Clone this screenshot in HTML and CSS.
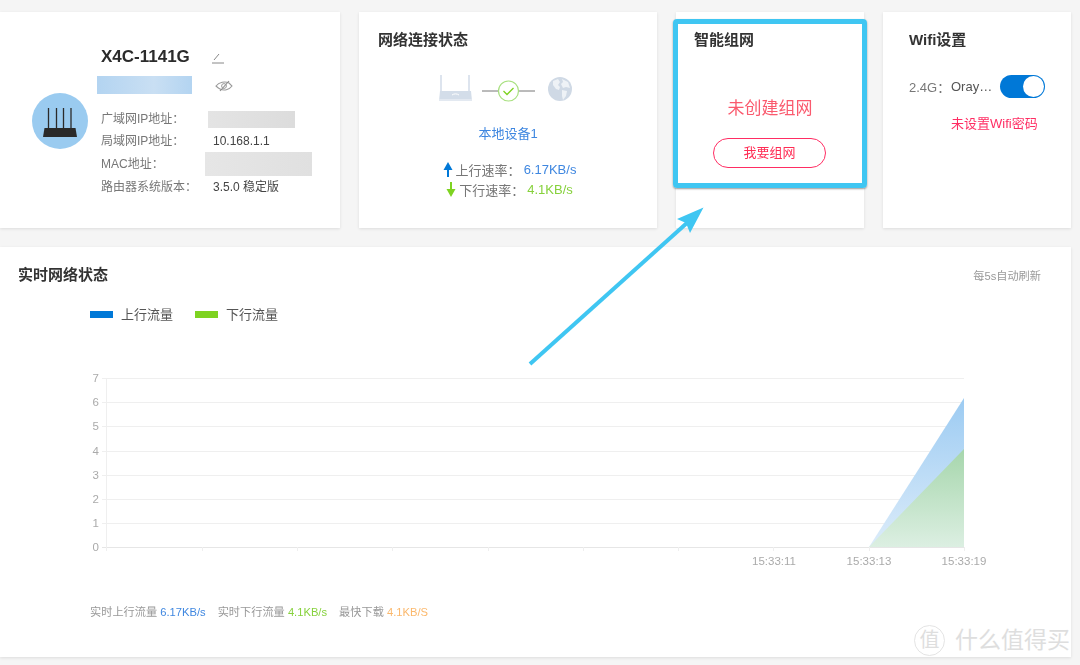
FILE: index.html
```html
<!doctype html>
<html lang="zh-CN">

<head>
    <meta charset="utf-8">
    <meta name="viewport" content="width=device-width, initial-scale=1, shrink-to-fit=no">
    <title>路由器状态</title>
    <link rel="stylesheet" href="styles.css">
</head>

<body>

    <div class="page">
        <section class="cards">
            <div class="card device">
                <div class="avatar">
                    <svg width="56" height="56" viewBox="0 0 56 56">
                        <circle cx="28" cy="28" r="28" fill="#9acbf0" />
                        <path d="M16.500 15v21M24.500 15v21M31.500 15v21M39 15v21" stroke="#2b2b2b" stroke-width="1.300" />
                        <path d="M11 44l1.500-9h31l1.500 9z" fill="#2a2a2a" />
                    </svg>
                </div>
                <div class="info">
                    <div class="name-row">
                        <b class="name">X4C-1141G</b>
                        <svg class="pen" width="14" height="14" viewBox="0 0 14 14">
                            <path d="M3 10l5-6M1 13h12" stroke="#888" stroke-width="1" fill="none" />
                        </svg>
                    </div>
                    <div class="pass-row">
                        <span class="mask mask-blue"></span>
                        <svg class="eye" width="18" height="14" viewBox="0 0 18 14">
                            <path d="M1 7c3-4 9-5 13-3 1 1 2 2 3 3-3 4-8 5-12 3-2-1-3-2-4-3z" stroke="#999" stroke-width="1.100" fill="none" />
                            <path d="M5 12L14 2" stroke="#888" stroke-width="1.100" />
                            <circle cx="9" cy="7" r="2.400" fill="none" stroke="#999" />
                        </svg>
                    </div>
                    <div class="row"><span class="label">广域网IP地址：</span><span class="mask mask-wan"></span></div>
                    <div class="row"><span class="label">局域网IP地址：</span><span class="value">10.168.1.1</span></div>
                    <div class="row"><span class="label">MAC地址：</span><span class="mask mask-mac"></span></div>
                    <div class="row"><span class="label">路由器系统版本：</span><span class="value">3.5.0 稳定版</span></div>
                </div>
            </div>

            <div class="card link">
                <h3>网络连接状态</h3>
                <div class="topology">
                    <svg width="121" height="30" viewBox="0 0 121 30">
                        <path d="M2 1v16M30 1v16" stroke="#d5deea" stroke-width="1.600" />
                        <path d="M1 17h31l1 10H0z" fill="#d3dde9" />
                        <path d="M0 25h33v2H0z" fill="#e3e9f1" />
                        <path d="M13 21c2-1.500 5-1.500 7 0" stroke="#fff" fill="none" />
                        <path d="M43 17h16M80 17h16" stroke="#777" stroke-width="1" />
                        <circle cx="69.500" cy="17" r="10" fill="#fff" stroke="#a8e080" stroke-width="1.200" />
                        <path d="M64.500 17l3.500 3.500 6.500-6.500" fill="none" stroke="#7ed321" stroke-width="1.300" />
                    </svg>
                    <svg class="globe" width="26" height="26" viewBox="0 0 26 26">
                        <circle cx="13" cy="13" r="12" fill="#cfd9e5" />
                        <path d="M6 5l5-2 2 3-2 3 2 2-1 3-3-1-3-4zM15 3l6 3 2 6-4-1-3 1-2-4 2-2zM15 14l5 1-1 5-3 4-1-4z" fill="#eef2f6" />
                    </svg>
                </div>
                <div class="local">本地设备1</div>
                <div class="speeds">
                    <div class="speed">
                        <svg width="10" height="15" viewBox="0 0 10 15"><path d="M5 0l4.500 8H6v7H4V8H.500z" fill="#0078d7" /></svg>
                        <span class="speed-label">上行速率：</span><span class="blue">6.17KB/s</span>
                    </div>
                    <div class="speed">
                        <svg width="10" height="15" viewBox="0 0 10 15"><path d="M4 0h2v7h3.500L5 15 .500 7H4z" fill="#7ed321" /></svg>
                        <span class="speed-label">下行速率：</span><span class="green">4.1KB/s</span>
                    </div>
                </div>
            </div>

            <div class="card mesh">
                <h3>智能组网</h3>
                <div class="mesh-state">未创建组网</div>
                <a class="mesh-btn" href="javascript:void(0)">我要组网</a>
            </div>

            <div class="card wifi">
                <h3>Wifi设置</h3>
                <div class="wifi-row">
                    <span class="band">2.4G：</span>
                    <span class="ssid">Oray…</span>
                    <span class="switch"><i></i></span>
                </div>
                <div class="wifi-warn">未设置Wifi密码</div>
            </div>
        </section>

        <section class="card chart-card">
            <div class="chart-head">
                <h3>实时网络状态</h3>
                <span class="refresh">每5s自动刷新</span>
            </div>
            <div class="legend">
                <span class="swatch swatch-up"></span><span class="legend-text">上行流量</span>
                <span class="swatch swatch-down"></span><span class="legend-text">下行流量</span>
            </div>
            <svg class="chart" width="1071" height="215" viewBox="0 360 1071 215">
                <defs>
                    <linearGradient id="fillUp" x1="0" y1="0" x2="0" y2="1">
                        <stop offset="0" stop-color="#9ccbf2" />
                        <stop offset="1" stop-color="#dcecfa" />
                    </linearGradient>
                    <linearGradient id="fillDown" x1="0" y1="0" x2="0" y2="1">
                        <stop offset="0" stop-color="#a6d6ac" />
                        <stop offset="1" stop-color="#dcefe2" />
                    </linearGradient>
                </defs>
                <g stroke="#efefef" stroke-width="1">
                    <path d="M102 378.500h862M102 402.500h862M102 426.500h862M102 451.500h862M102 475.500h862M102 499.500h862M102 523.500h862" />
                    <path d="M102 547.500h862" stroke="#e6e6e6" />
                    <path d="M106.500 378v173" />
                    <path d="M202.500 547v4M297.500 547v4M392.500 547v4M488.500 547v4M583.500 547v4M678.500 547v4M773.500 547v4M869.500 547v4M964.500 547v4" />
                </g>
                <path d="M869 547L964 398V547z" fill="url(#fillUp)" />
                <path d="M869 547L964 449V547z" fill="url(#fillDown)" />
                <g class="y-axis" text-anchor="end">
                    <text x="99" y="382">7</text>
                    <text x="99" y="406">6</text>
                    <text x="99" y="430">5</text>
                    <text x="99" y="455">4</text>
                    <text x="99" y="479">3</text>
                    <text x="99" y="503">2</text>
                    <text x="99" y="527">1</text>
                    <text x="99" y="551">0</text>
                </g>
                <g class="x-axis" text-anchor="middle">
                    <text x="774" y="565">15:33:11</text>
                    <text x="869" y="565">15:33:13</text>
                    <text x="964" y="565">15:33:19</text>
                </g>
            </svg>
            <div class="totals">
                <span>实时上行流量 <em class="blue">6.17KB/s</em></span>
                <span>实时下行流量 <em class="green">4.1KB/s</em></span>
                <span>最快下载 <em class="orange">4.1KB/S</em></span>
            </div>
        </section>
    </div>

    <!-- annotation drawn over the screenshot -->
    <div class="highlight"></div>
    <svg class="arrow" width="1080" height="665" viewBox="0 0 1080 665">
        <path d="M530 364L688 222" stroke="#3fc6f2" stroke-width="4" />
        <path d="M703.500 207.500L677 219l9 4 4 10z" fill="#3fc6f2" />
    </svg>

    <div class="watermark">
        <span class="wm-mark">值</span>
        <span>什么值得买</span>
    </div>

</body>

</html>
```

FILE: styles.css
```css
body {
    font-family: "Liberation Sans", "Noto Sans CJK SC", sans-serif;
    margin: 0;
    padding: 0;
    height: 665px;
    overflow: hidden;
    background-color: #f5f5f5;
    color: #333;
}

h3 {
    margin: 0;
    font-size: 15px;
    line-height: 20px;
    color: #333;
}

em {
    font-style: normal;
}

.blue {
    color: #3f87e0;
}

.green {
    color: #86d13c;
}

.orange {
    color: #fbb86c;
}

.page {
    padding: 12px 9px 8px 0;
    filter: blur(.3px);
}

.cards {
    display: grid;
    grid-template-columns: 340px 298px 188px 188px;
    column-gap: 19px;
    height: 216px;
}

.card {
    background: #fff;
    box-shadow: 0 1px 3px rgba(0, 0, 0, .1);
}

.device {
    display: flex;
    align-items: flex-start;
}

.avatar {
    margin: 81px 0 0 32px;
    height: 56px;
}

.info {
    margin: 34px 0 0 9px;
    font-size: 12px;
}

.name-row {
    display: flex;
    align-items: center;
    height: 22px;
    padding-left: 4px;
}

.name {
    width: 110px;
    font-size: 17px;
    color: #2b2b2b;
}

.pass-row {
    display: flex;
    align-items: center;
    height: 18px;
    margin-top: 8px;
    margin-bottom: 14px;
}

.eye {
    margin-left: 23px;
    margin-top: 2px;
}

.mask {
    display: block;
}

.mask-blue {
    width: 95px;
    height: 18px;
    background: linear-gradient(90deg, #b3d4f1, #c9dff3 60%, #b3d4f1);
}

.mask-wan {
    width: 87px;
    height: 17px;
    margin-left: -5px;
    background: linear-gradient(90deg, #e4e4e4, #dcdcdc);
}

.mask-mac {
    width: 107px;
    height: 24px;
    margin-left: -8px;
    background: linear-gradient(90deg, #e6e6e6, #e0e0e0);
}

.row {
    display: flex;
    align-items: center;
    height: 22.600px;
    padding-left: 4px;
    line-height: 17px;
}

.label {
    width: 112px;
    color: #777;
}

.value {
    color: #444;
}

.link {
    padding: 18px 0 0 19px;
    box-sizing: border-box;
}

.topology {
    display: flex;
    align-items: center;
    height: 30px;
    margin: 24px 0 0 61px;
}

.globe {
    margin-left: -13px;
}

.local {
    margin: 21px 19px 0 0;
    font-size: 13px;
    line-height: 17px;
    text-align: center;
    color: #3f87e0;
}

.speeds {
    margin: 17px 16px 0 0;
    font-size: 13px;
}

.speed {
    display: flex;
    align-items: center;
    justify-content: center;
    height: 20px;
}

.speed svg {
    margin-right: 3px;
}

.speed-label {
    margin-right: 3px;
    color: #777;
}

.mesh {
    padding-top: 18px;
    box-sizing: border-box;
    text-align: center;
}

.mesh h3 {
    padding-left: 18px;
    text-align: left;
}

.mesh-state {
    margin-top: 47px;
    font-size: 17px;
    line-height: 24px;
    color: #fa5a6e;
}

.mesh-btn {
    display: block;
    width: 111px;
    height: 28px;
    margin: 17px 0 0 37px;
    border: 1px solid #ff2d63;
    border-radius: 15px;
    font-size: 13px;
    line-height: 28px;
    text-decoration: none;
    color: #ff2d55;
}

.wifi {
    padding: 18px 0 0 26px;
    box-sizing: border-box;
}

.wifi-row {
    display: flex;
    align-items: center;
    height: 23px;
    margin-top: 25px;
    font-size: 13px;
}

.band {
    width: 42px;
    color: #777;
}

.ssid {
    width: 49px;
    color: #555;
}

.switch {
    display: flex;
    justify-content: flex-end;
    align-items: center;
    box-sizing: border-box;
    width: 45px;
    height: 23px;
    padding-right: 1px;
    border-radius: 12px;
    background: #0078d7;
}

.switch i {
    width: 21px;
    height: 21px;
    border-radius: 50%;
    background: #fff;
}

.wifi-warn {
    margin: 17px 0 0 42px;
    font-size: 13px;
    line-height: 18px;
    color: #ff2d63;
}

.chart-card {
    height: 410px;
    margin-top: 19px;
    box-sizing: border-box;
    padding-top: 18px;
}

.chart-head {
    display: flex;
    justify-content: space-between;
    align-items: center;
    padding: 0 30px 0 18px;
}

.refresh {
    font-size: 11.200px;
    color: #999;
}

.legend {
    display: flex;
    align-items: center;
    height: 20px;
    margin-top: 18px;
    padding-left: 90px;
    font-size: 13px;
}

.swatch {
    width: 23px;
    height: 7px;
    margin: 2px 8px 0 0;
}

.swatch-up {
    background: #0078d7;
}

.swatch-down {
    background: #7ed321;
}

.legend-text {
    width: 74px;
    color: #555;
}

.chart {
    display: block;
    margin-top: 37px;
}

.chart text {
    font-size: 11.500px;
    fill: #aaa;
}

.totals {
    display: flex;
    column-gap: 12px;
    margin-top: 29px;
    padding-left: 90px;
    font-size: 11.200px;
    line-height: 16px;
    color: #999;
}

.highlight {
    position: absolute;
    left: 673px;
    top: 19px;
    width: 184px;
    height: 159px;
    border: 5px solid #3fc6f2;
    border-radius: 4px;
    box-shadow: 0 1px 2px rgba(0, 0, 0, .4);
}

.arrow {
    position: absolute;
    left: 0;
    top: 0;
}

.watermark {
    position: absolute;
    left: 914px;
    top: 624px;
    display: flex;
    align-items: center;
    column-gap: 10px;
    font-size: 23px;
    line-height: 32px;
    color: #dedede;
}

.wm-mark {
    display: block;
    width: 29px;
    height: 29px;
    border: 1px solid #e4e4e4;
    border-radius: 50%;
    font-size: 20px;
    line-height: 29px;
    text-align: center;
}
```
